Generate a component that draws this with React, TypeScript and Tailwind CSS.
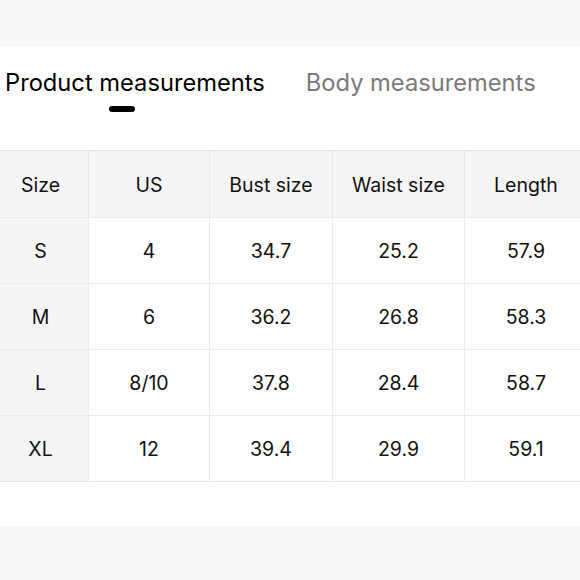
const HEAD = ['Size', 'US', 'Bust size', 'Waist size', 'Length'];

const ROWS = [
  ['S', '4', '34.7', '25.2', '57.9'],
  ['M', '6', '36.2', '26.8', '58.3'],
  ['L', '8/10', '37.8', '28.4', '58.7'],
  ['XL', '12', '39.4', '29.9', '59.1'],
];

const COLS = 'grid grid-cols-[89px_121px_123px_132px_1fr]';

function pad(i: number) {
  if (i === 0) return 'pr-[7px]';
  if (i === 4) return 'pl-[7px]';
  return '';
}

export default function App() {
  return (
    <div className="flex h-[580px] w-[580px] flex-col overflow-hidden bg-[#f6f6f6] font-['Inter',sans-serif] text-[#111]">
      <div className="h-[47px] shrink-0 bg-[#f7f7f7]" />

      <div className="flex h-[479px] shrink-0 flex-col bg-white">
        <div className="flex h-[103px] items-start pl-[5px] pt-[21px]">
          <div className="flex flex-col">
            <span className="text-[23.7px] leading-[30px] text-black">Product measurements</span>
            <span className="ml-[104px] mt-[8px] h-[6px] w-[26px] rounded-full bg-black" />
          </div>
          <span className="ml-[41px] text-[23.7px] leading-[30px] text-[#7a7a7a]">
            Body measurements
          </span>
        </div>

        <div className="border-y border-[#e6e6e6]">
          <div className={`${COLS} h-[66px] bg-[#f5f5f5] text-[19.5px]`}>
            {HEAD.map((h, i) => (
              <div
                key={h}
                className={`flex items-center justify-center pt-[3px] ${pad(i)} ${i < HEAD.length - 1 ? 'border-r border-[#e9e9e9]' : ''}`}
              >
                {h}
              </div>
            ))}
          </div>
          {ROWS.map((r) => (
            <div key={r[0]} className={`${COLS} h-[66px] border-t border-[#ececec] text-[19.5px]`}>
              {r.map((c, i) => (
                <div
                  key={i}
                  className={`flex items-center justify-center pt-[3px] ${pad(i)} ${i === 0 ? 'bg-[#f5f5f5]' : 'bg-white'} ${i < r.length - 1 ? 'border-r border-[#ececec]' : ''}`}
                >
                  {c}
                </div>
              ))}
            </div>
          ))}
        </div>
      </div>

      <div className="flex-1 bg-[#f6f6f6]" />
    </div>
  );
}
